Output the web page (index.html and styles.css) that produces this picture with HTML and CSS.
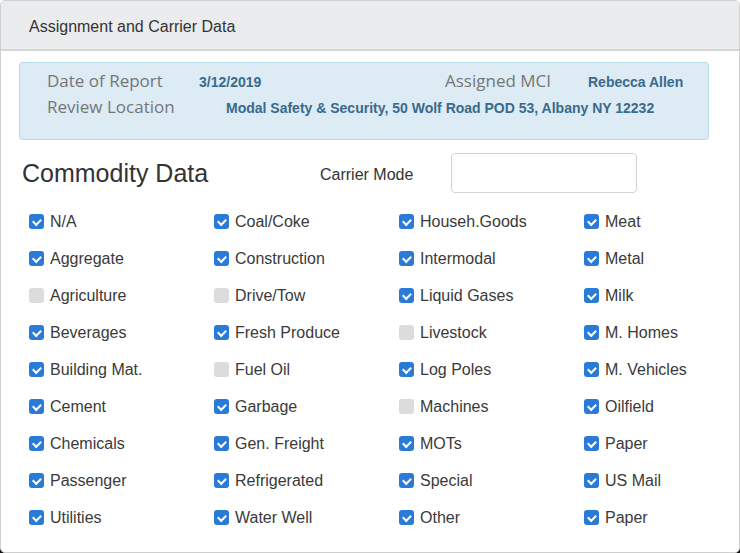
FILE: index.html
```html
<!DOCTYPE html>
<html>
<head>
<meta charset="utf-8">
<link rel="stylesheet" href="styles.css">
</head>
<body>
<div class="card">
  <div class="card-header">Assignment and Carrier Data</div>
  <div class="card-body">
    <div class="info">
      <div class="info-row">
        <span class="lbl lbl-date">Date of Report</span>
        <span class="val val-date">3/12/2019</span>
        <span class="lbl lbl-mci">Assigned MCI</span>
        <span class="val val-mci">Rebecca Allen</span>
      </div>
      <div class="info-row">
        <span class="lbl lbl-loc">Review Location</span>
        <span class="val val-loc">Modal Safety &amp; Security, 50 Wolf Road POD 53, Albany NY 12232</span>
      </div>
    </div>
    <div class="commodity-head">
      <h2 class="section-title">Commodity Data</h2>
      <label class="mode-label">Carrier Mode</label>
      <div class="mode-input"></div>
    </div>
    <div class="grid">
      <div class="item"><span class="cb on"></span>N/A</div>
      <div class="item"><span class="cb on"></span>Coal/Coke</div>
      <div class="item"><span class="cb on"></span>Househ.Goods</div>
      <div class="item"><span class="cb on"></span>Meat</div>

      <div class="item"><span class="cb on"></span>Aggregate</div>
      <div class="item"><span class="cb on"></span>Construction</div>
      <div class="item"><span class="cb on"></span>Intermodal</div>
      <div class="item"><span class="cb on"></span>Metal</div>

      <div class="item"><span class="cb"></span>Agriculture</div>
      <div class="item"><span class="cb"></span>Drive/Tow</div>
      <div class="item"><span class="cb on"></span>Liquid Gases</div>
      <div class="item"><span class="cb on"></span>Milk</div>

      <div class="item"><span class="cb on"></span>Beverages</div>
      <div class="item"><span class="cb on"></span>Fresh Produce</div>
      <div class="item"><span class="cb"></span>Livestock</div>
      <div class="item"><span class="cb on"></span>M. Homes</div>

      <div class="item"><span class="cb on"></span>Building Mat.</div>
      <div class="item"><span class="cb"></span>Fuel Oil</div>
      <div class="item"><span class="cb on"></span>Log Poles</div>
      <div class="item"><span class="cb on"></span>M. Vehicles</div>

      <div class="item"><span class="cb on"></span>Cement</div>
      <div class="item"><span class="cb on"></span>Garbage</div>
      <div class="item"><span class="cb"></span>Machines</div>
      <div class="item"><span class="cb on"></span>Oilfield</div>

      <div class="item"><span class="cb on"></span>Chemicals</div>
      <div class="item"><span class="cb on"></span>Gen. Freight</div>
      <div class="item"><span class="cb on"></span>MOTs</div>
      <div class="item"><span class="cb on"></span>Paper</div>

      <div class="item"><span class="cb on"></span>Passenger</div>
      <div class="item"><span class="cb on"></span>Refrigerated</div>
      <div class="item"><span class="cb on"></span>Special</div>
      <div class="item"><span class="cb on"></span>US Mail</div>

      <div class="item"><span class="cb on"></span>Utilities</div>
      <div class="item"><span class="cb on"></span>Water Well</div>
      <div class="item"><span class="cb on"></span>Other</div>
      <div class="item"><span class="cb on"></span>Paper</div>
    </div>
  </div>
</div>
</body>
</html>
```
FILE: styles.css
```css
html, body {
  margin: 0;
  padding: 0;
}
body {
  width: 740px;
  height: 553px;
  background: linear-gradient(#ffffff 50%, #111111 50%);
  font-family: "Liberation Sans", Arial, sans-serif;
  color: #333;
  overflow: hidden;
}
.card {
  box-sizing: border-box;
  width: 740px;
  height: 553px;
  background: #fff;
  border: 1px solid #cfcfcf;
  border-radius: 5px;
  overflow: hidden;
}
.card-header {
  box-sizing: border-box;
  height: 50px;
  background: #ebeced;
  border-bottom: 2px solid #d6d6d6;
  padding: 17px 0 0 28px;
  font-size: 16px;
  color: #333;
}
.card-body {
  padding: 11px 30px 0 18px;
}
.info {
  box-sizing: border-box;
  height: 78px;
  background: #dcebf4;
  border: 1px solid #b9dcee;
  border-radius: 3px;
  padding: 6px 0 0 27px;
}
.info-row {
  display: flex;
  align-items: baseline;
  height: 26px;
}
.lbl {
  font-family: "Open Sans", "Noto Sans", sans-serif;
  font-size: 17px;
  color: #767676;
  font-weight: 400;
}
.val {
  font-weight: bold;
  font-size: 14px;
  color: #3a6a8c;
}
.lbl-date { width: 152px; }
.val-date { width: 246px; }
.lbl-mci { width: 143px; }
.lbl-loc { width: 179px; }
.commodity-head {
  display: flex;
  align-items: center;
  height: 39px;
  margin-top: 14px;
}
.section-title {
  margin: 0 0 0 3px;
  font-size: 25px;
  font-weight: normal;
  color: #333;
  width: 298px;
}
.mode-label {
  font-size: 16px;
  color: #333;
  width: 131px;
  padding-top: 2px;
}
.mode-input {
  box-sizing: border-box;
  width: 186px;
  height: 40px;
  border: 1px solid #d4d4d4;
  border-radius: 4px;
  margin-top: -1px;
}
.grid {
  display: grid;
  grid-template-columns: repeat(4, 185px);
  grid-auto-rows: 37px;
  margin: 10px 0 0 10px;
}
.item {
  display: flex;
  align-items: center;
  font-size: 16px;
  color: #3a3a3a;
}
.cb {
  box-sizing: border-box;
  width: 15px;
  height: 15px;
  border-radius: 3px;
  background: #dcdcdc;
  margin-right: 6px;
  flex: none;
  position: relative;
}
.cb.on {
  background: #2a7bd7;
}
.cb.on::after {
  content: "";
  position: absolute;
  left: 4.5px;
  top: 3px;
  width: 3.5px;
  height: 6px;
  border: solid #fff;
  border-width: 0 2px 2px 0;
  transform: rotate(45deg);
}
```
